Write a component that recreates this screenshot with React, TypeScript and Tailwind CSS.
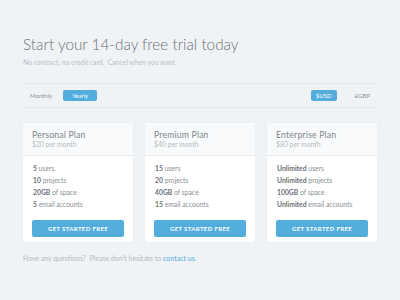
const plans = [
  {
    name: "Personal Plan",
    price: "$20 per month",
    features: [
      ["5", "users"],
      ["10", "projects"],
      ["20GB", "of space"],
      ["5", "email accounts"],
    ],
  },
  {
    name: "Premium Plan",
    price: "$40 per month",
    features: [
      ["15", "users"],
      ["20", "projects"],
      ["40GB", "of space"],
      ["15", "email accounts"],
    ],
  },
  {
    name: "Enterprise Plan",
    price: "$80 per month",
    features: [
      ["Unlimited", "users"],
      ["Unlimited", "projects"],
      ["100GB", "of space"],
      ["Unlimited", "email accounts"],
    ],
  },
];

function PlanCard({ plan }: { plan: (typeof plans)[number] }) {
  return (
    <div className="flex flex-col bg-white rounded-[2px] shadow-[0_0_2px_rgba(0,0,0,0.06)]">
      <div className="bg-[#f8fafb] border-b border-[#e8ecef] h-[33px] pl-[9px] pt-[6px]">
        <p className="text-[8.7px] leading-[11px] tracking-[0.02em] text-[#80868b]">{plan.name}</p>
        <p className="text-[6.8px] leading-[9px] text-[#b5bbc0]">{plan.price}</p>
      </div>
      <div className="flex flex-col gap-[3px] pl-[10px] pt-[8px]">
        {plan.features.map(([b, rest]) => (
          <p key={rest} className="text-[6.8px] leading-[9px] text-[#8a8f94]">
            <span className="font-bold text-[#6c7176]">{b}</span> {rest}
          </p>
        ))}
      </div>
      <button className="mx-[9px] mt-[11px] mb-[5px] h-[17px] rounded-[2px] bg-[#52addd] text-white text-[6px] font-bold tracking-[0.06em]">
        GET STARTED FREE
      </button>
    </div>
  );
}

export default function App() {
  return (
    <div className="w-[400px] h-[300px] bg-[#eff3f6] px-[23px] pt-[35px] font-['Lato',sans-serif]">
      <h1 className="text-[15.3px] leading-[19px] font-light text-[#6b7075]">
        Start your 14-day free trial today
      </h1>
      <p className="mt-[3px] text-[6.8px] leading-[10px] text-[#b9c0c6]">
        No contract, no credit card.&nbsp; Cancel when you want.
      </p>
      <div className="mt-[16px] border-y border-[#e4e9ed] h-[25px] flex items-center pl-[7px] pr-[7px]">
        <span className="text-[6px] text-[#8d9297]">Monthly</span>
        <span className="ml-[11px] w-[34px] h-[11px] rounded-[2px] bg-[#52addd] text-white text-[6px] flex items-center justify-center">
          Yearly
        </span>
        <span className="ml-auto w-[26px] h-[11px] rounded-[2px] bg-[#52addd] text-white text-[6px] flex items-center justify-center">
          $USD
        </span>
        <span className="ml-[18px] text-[6px] text-[#8d9297]">£GBP</span>
      </div>
      <div className="mt-[15px] grid grid-cols-3 gap-[12px]">
        {plans.map((p) => (
          <PlanCard key={p.name} plan={p} />
        ))}
      </div>
      <p className="mt-[11px] text-[7px] text-[#b3bac0]">
        Have any questions?&nbsp; Please don't hesitate to{" "}
        <span className="text-[#52addd]">contact us</span>.
      </p>
    </div>
  );
}
